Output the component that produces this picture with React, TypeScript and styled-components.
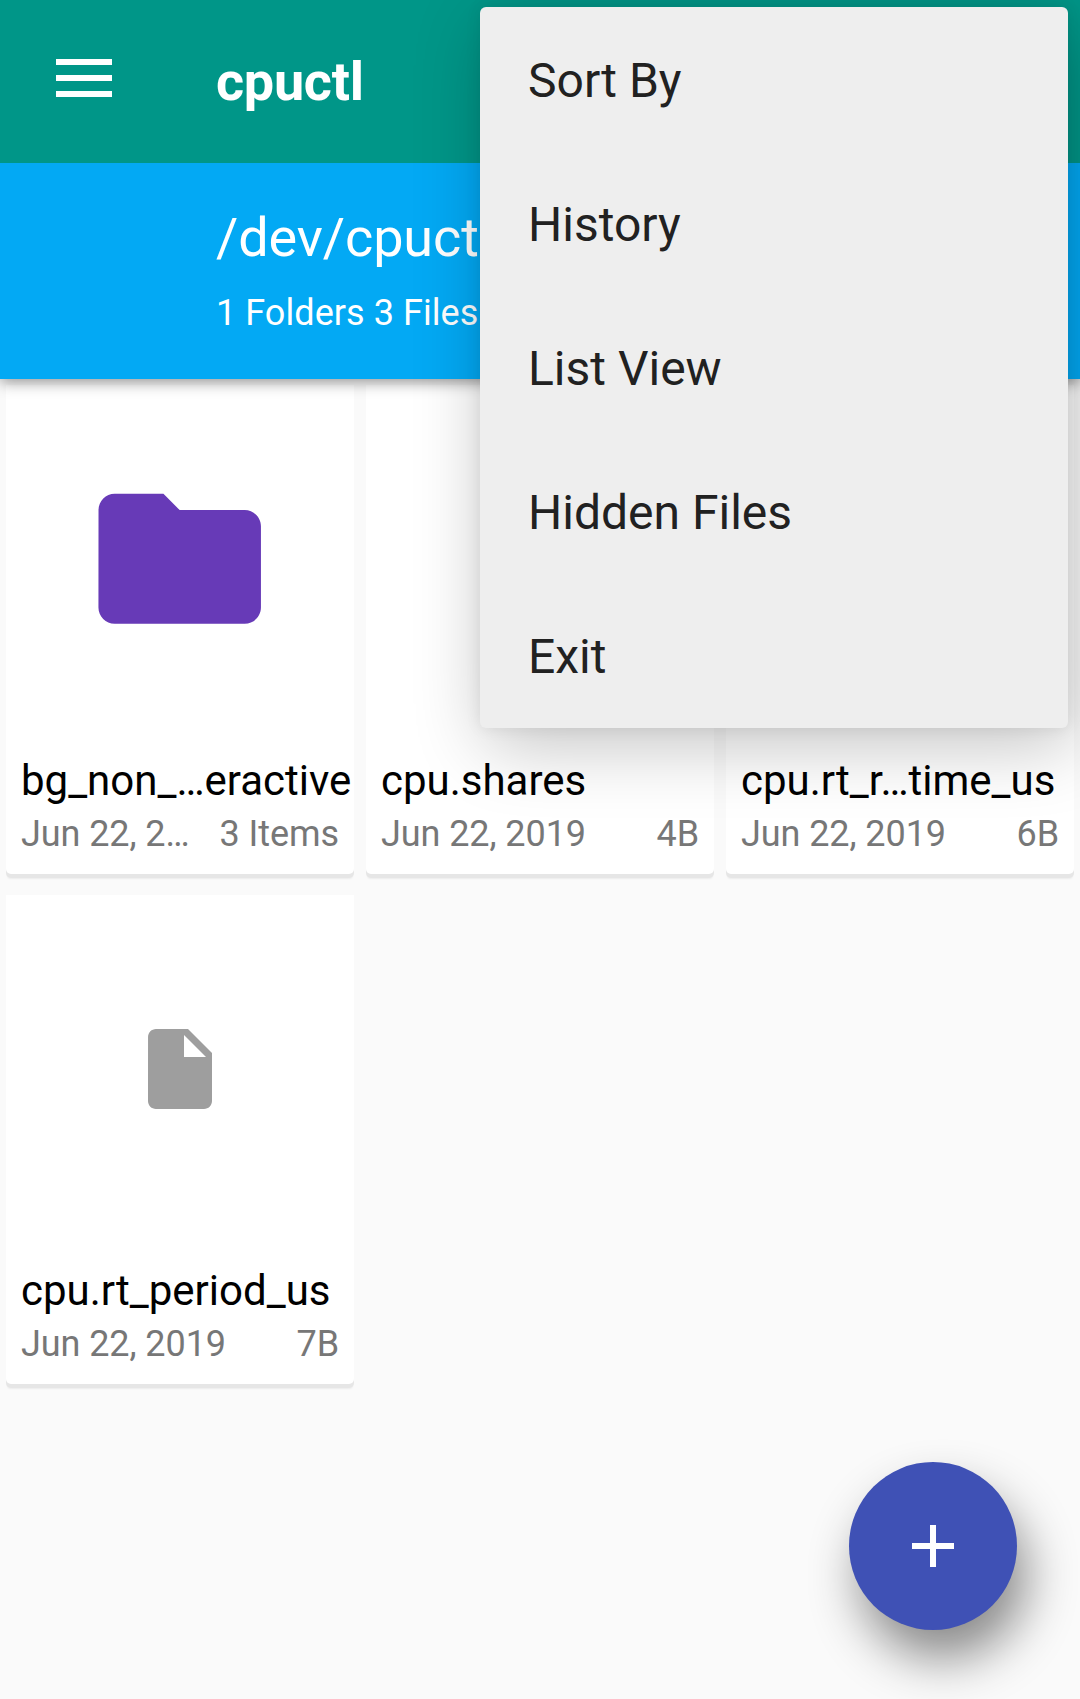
import React from "react";
import styled, { createGlobalStyle } from "styled-components";

const GlobalStyle = createGlobalStyle`
  *, *::before, *::after { box-sizing: border-box; }
  body {
    margin: 0;
    background: #fafafa;
    font-family: Roboto, "Noto Sans", sans-serif;
  }
`;

const Screen = styled.div`
  position: relative;
  width: 1080px;
  height: 1699px;
  overflow: hidden;
  background: #fafafa;
`;

const Header = styled.header`
  position: relative;
  z-index: 1;
  box-shadow: 0 3px 14px rgba(0, 0, 0, 0.42);
`;

const Toolbar = styled.div`
  display: flex;
  align-items: flex-start;
  height: 163px;
  padding: 50px 56px 0;
  background: #009688;
`;

const MenuButton = styled.button`
  display: flex;
  width: 160px;
  padding: 9px 0 0;
  border: 0;
  background: none;
`;

const Title = styled.h1`
  margin: 0;
  color: #fff;
  font-size: 54px;
  font-weight: 700;
  line-height: 64px;
  letter-spacing: -0.3px;
`;

const PathBar = styled.div`
  display: flex;
  flex-direction: column;
  gap: 22px;
  height: 216px;
  padding: 43px 0 0 216px;
  background: #03a9f4;
  color: #fff;
`;

const PathText = styled.div`
  font-size: 54px;
  line-height: 64px;
  letter-spacing: -0.1px;
`;

const CountText = styled.div`
  font-size: 36px;
  line-height: 42px;
  letter-spacing: 0.06px;
`;

const Grid = styled.main`
  display: grid;
  grid-template-columns: repeat(3, 348px);
  gap: 21px 12px;
  padding: 6px;
`;

const Card = styled.article`
  height: 489px;
  border-radius: 0 0 5px 5px;
  background: #fff;
  box-shadow: 0 4px 0 #e6e6e6, 0 6px 2px -1px rgba(0, 0, 0, 0.06);
`;

const Thumb = styled.div`
  display: flex;
  align-items: center;
  justify-content: center;
  height: 348px;
`;

const Info = styled.div`
  display: flex;
  flex-direction: column;
  gap: 7px;
  padding: 23px 15px 0;
`;

const FileName = styled.div`
  color: #000;
  font-size: 42px;
  line-height: 50px;
  white-space: nowrap;
`;

const Meta = styled.div`
  display: flex;
  justify-content: space-between;
  color: #777;
  font-size: 36px;
  line-height: 42px;
  letter-spacing: -0.08px;
  white-space: nowrap;
`;

const Menu = styled.nav`
  position: absolute;
  z-index: 2;
  top: 7px;
  left: 480px;
  width: 588.4px;
  padding-bottom: 0.5px;
  border-radius: 6px;
  background: #eee;
  box-shadow: 6px 17px 72px rgba(0, 0, 0, 0.24), 0 0 16px rgba(0, 0, 0, 0.08);
`;

const MenuItem = styled.div`
  display: flex;
  align-items: center;
  height: 144px;
  padding: 3px 48px 0;
  color: #212121;
  font-size: 48px;
`;

const Fab = styled.button`
  position: absolute;
  top: 1462px;
  left: 849px;
  display: flex;
  align-items: center;
  justify-content: center;
  width: 168px;
  height: 168px;
  padding: 0;
  border: 0;
  border-radius: 50%;
  background: #3f51b5;
  box-shadow: 10px 29px 50px -1px rgba(0, 0, 0, 0.46);
`;

const FolderIcon = () => (
  <svg width="195" height="195" viewBox="0.1 0.08 24 24" fill="#673ab7">
    <path d="M10 4H4c-1.1 0-1.99.9-1.99 2L2 18c0 1.1.9 2 2 2h16c1.1 0 2-.9 2-2V8c0-1.1-.9-2-2-2h-8l-2-2z" />
  </svg>
);

const FileIcon = () => (
  <svg width="96" height="96" viewBox="0 0 24 24" fill="#9e9e9e">
    <path d="M6 2c-1.1 0-1.99.9-1.99 2L4 20c0 1.1.89 2 1.99 2H18c1.1 0 2-.9 2-2V8l-6-6H6zm7 7V3.5L18.5 9H13z" />
  </svg>
);

const files = [
  { name: "bg_non_…eractive", date: "Jun 22, 2…", size: "3 Items", folder: true },
  { name: "cpu.shares", date: "Jun 22, 2019", size: "4B", folder: false },
  { name: "cpu.rt_r…time_us", date: "Jun 22, 2019", size: "6B", folder: false },
  { name: "cpu.rt_period_us", date: "Jun 22, 2019", size: "7B", folder: false },
];

const menuItems = ["Sort By", "History", "List View", "Hidden Files", "Exit"];

export default function App() {
  return (
    <>
      <GlobalStyle />
      <Screen>
        <Header>
          <Toolbar>
            <MenuButton aria-label="Menu">
              <svg width="56" height="38" viewBox="0 0 56 38" fill="#fff">
                <path d="M0 0h56v6H0zM0 16h56v6H0zM0 32h56v6H0z" />
              </svg>
            </MenuButton>
            <Title>cpuctl</Title>
          </Toolbar>
          <PathBar>
            <PathText>/dev/cpuctl</PathText>
            <CountText>1 Folders 3 Files</CountText>
          </PathBar>
        </Header>
        <Grid>
          {files.map((file) => (
            <Card key={file.name}>
              <Thumb>{file.folder ? <FolderIcon /> : <FileIcon />}</Thumb>
              <Info>
                <FileName>{file.name}</FileName>
                <Meta>
                  <span>{file.date}</span>
                  <span>{file.size}</span>
                </Meta>
              </Info>
            </Card>
          ))}
        </Grid>
        <Fab aria-label="Add">
          <svg width="42" height="42" viewBox="0 0 42 42" fill="#fff">
            <path d="M18 0h6v18h18v6H24v18h-6V24H0v-6h18z" />
          </svg>
        </Fab>
        <Menu>
          {menuItems.map((item) => (
            <MenuItem key={item}>{item}</MenuItem>
          ))}
        </Menu>
      </Screen>
    </>
  );
}
